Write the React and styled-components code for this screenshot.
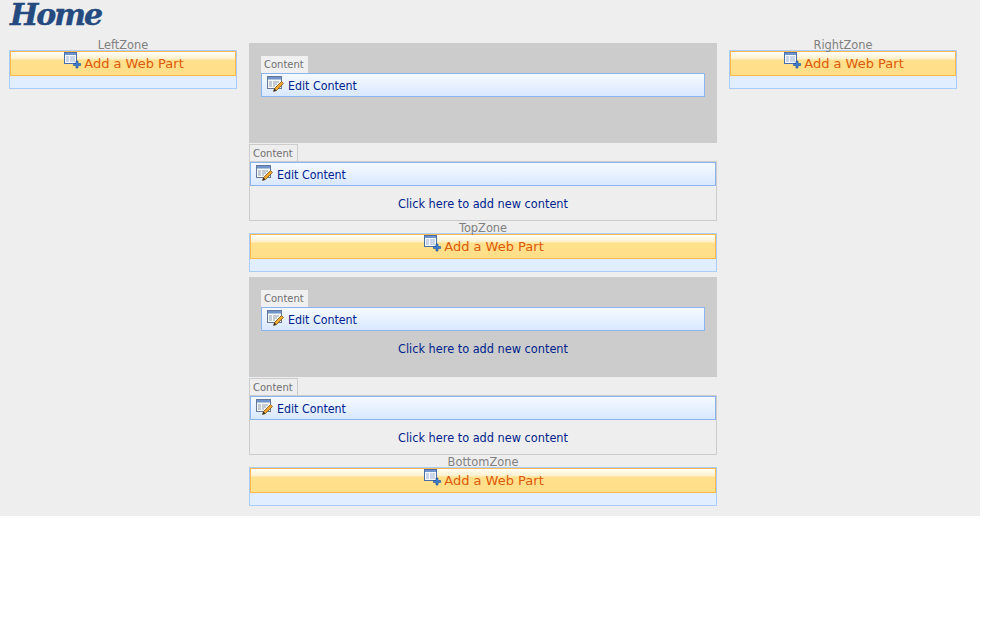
import React from "react";
import styled, { createGlobalStyle } from "styled-components";

const GlobalStyle = createGlobalStyle`
  html, body {
    margin: 0;
    padding: 0;
    background: #fff;
  }
  body {
    font-family: "DejaVu Sans", Verdana, sans-serif;
  }
`;

const Page = styled.div`
  width: 980px;
  height: 516px;
  background: #eeeeee;
`;

const Title = styled.h1`
  margin: 0;
  height: 43px;
  padding-left: 10px;
  font-family: "DejaVu Serif", serif;
  font-size: 30px;
  line-height: 30px;
  letter-spacing: -2px;
  font-weight: bold;
  font-style: italic;
  color: #254a80;
  -webkit-text-stroke: 0.4px #254a80;
`;

const Columns = styled.div`
  display: grid;
  grid-template-columns: 228px 468px 228px;
  column-gap: 12px;
  padding-left: 9px;
`;

const Center = styled.div`
  display: flex;
  flex-direction: column;
`;

const ZoneLabel = styled.div`
  height: 11px;
  font-size: 11.4px;
  line-height: 13px;
  text-align: center;
  color: #808080;
`;

const ZoneBox = styled.div`
  height: 39px;
  box-sizing: border-box;
  border: 1px solid #a9cdfb;
  background: #e1eeff;
`;

const AddButton = styled.div`
  height: 25px;
  box-sizing: border-box;
  border: 1px solid #ffb84d;
  background: linear-gradient(to bottom, #fffef8 0, #fff0cb 7px, #ffe08c 8px, #ffdf88 100%);
  display: flex;
  justify-content: center;
  gap: 3px;
  color: #dc5a0a;
  font-size: 13px;
  line-height: 23px;
`;

const AddIcon = styled.svg`
  width: 17px;
  height: 17px;
  flex: none;
  margin-left: 2px;
`;

const EditBar = styled.div`
  height: 24px;
  box-sizing: border-box;
  border: 1px solid #8ab4ee;
  background: linear-gradient(to bottom, #f6faff 0, #d9e8ff 100%);
  display: flex;
  align-items: center;
  gap: 4px;
  padding: 1px 0 0 5px;
  color: #001e8c;
  font-family: "DejaVu Sans Condensed", "DejaVu Sans", sans-serif;
  font-stretch: condensed;
  font-size: 12.3px;
`;

const EditIcon = styled.svg`
  width: 17px;
  height: 17px;
  flex: none;
  margin-top: -3px;
`;

const Tab = styled.div`
  width: fit-content;
  box-sizing: border-box;
  height: 17px;
  padding: 0 4px 0 3px;
  font-size: 10px;
  line-height: 17px;
  color: #707070;
  background: #f0f0f0;
  ${(props) => props.$outlined && "border: 1px solid #cccccc; border-bottom: 0; background: #eeeeee;"}
`;

const ClickText = styled.div`
  text-align: center;
  font-family: "DejaVu Sans Condensed", "DejaVu Sans", sans-serif;
  font-stretch: condensed;
  font-size: 12.6px;
  line-height: 14px;
  color: #001e8c;
`;

const GrayPart = styled.div`
  height: 100px;
  box-sizing: border-box;
  background: #cccccc;
  padding: 13px 12px 0;
  ${ClickText} {
    margin-top: 11px;
  }
`;

const PlainPart = styled.div`
  margin-top: 1px;
`;

const PlainBody = styled.div`
  height: 60px;
  box-sizing: border-box;
  border: 1px solid #cccccc;
  ${ClickText} {
    margin-top: 11px;
  }
`;

const ZoneGap = styled.div`
  margin-top: 1px;
  margin-bottom: 5px;
`;

const SideZone = styled.div`
  margin-top: -4px;
`;

const AddWebPartIcon = () => (
  <AddIcon viewBox="0 0 17 17">
    <rect x="0.5" y="0.5" width="12" height="11" fill="#f4f7fc" stroke="#4a6fa8" />
    <rect x="1" y="1" width="11" height="2" fill="#6f93cc" />
    <path d="M2 5h3M6 5h5M2 7h3M6 7h5M2 9h3M6 9h5" stroke="#9fb4d4" />
    <path d="M12 9h2v2.500h2.500v2H14V16h-2v-2.500H9.500v-2H12z" fill="#3f7fd0" stroke="#1c4a96" strokeWidth="0.6" />
  </AddIcon>
);

const EditContentIcon = () => (
  <EditIcon viewBox="0 0 17 17">
    <rect x="0.5" y="0.500" width="14" height="12" fill="#f6f6f2" stroke="#66789a" />
    <rect x="1" y="1" width="13" height="2.500" fill="#6f93cc" />
    <path d="M2 6h3M6 6h6M2 8h3M6 8h4M2 10h3M6 10h2" stroke="#8f9fb8" />
    <path d="M14.500 5.500l2 2-7 7-3 1 1-3z" fill="#f2a62c" stroke="#6b4a16" strokeWidth="0.7" />
    <path d="M6.500 15.500l1-3 2 2z" fill="#2a2a2a" />
  </EditIcon>
);

const Zone = ({ name }) => (
  <div>
    <ZoneLabel>{name}</ZoneLabel>
    <ZoneBox>
      <AddButton>
        <AddWebPartIcon />
        <span>Add a Web Part</span>
      </AddButton>
    </ZoneBox>
  </div>
);

const EditHeader = () => (
  <EditBar>
    <EditContentIcon />
    <span>Edit Content</span>
  </EditBar>
);

const Gray = ({ empty }) => (
  <GrayPart>
    <Tab>Content</Tab>
    <EditHeader />
    {!empty && <ClickText>Click here to add new content</ClickText>}
  </GrayPart>
);

const Plain = () => (
  <PlainPart>
    <Tab $outlined>Content</Tab>
    <PlainBody>
      <EditHeader />
      <ClickText>Click here to add new content</ClickText>
    </PlainBody>
  </PlainPart>
);

const App = () => (
  <>
    <GlobalStyle />
    <Page>
      <Title>Home</Title>
      <Columns>
        <SideZone>
          <Zone name="LeftZone" />
        </SideZone>
        <Center>
          <Gray empty />
          <Plain />
          <ZoneGap>
            <Zone name="TopZone" />
          </ZoneGap>
          <Gray />
          <Plain />
          <ZoneGap>
            <Zone name="BottomZone" />
          </ZoneGap>
        </Center>
        <SideZone>
          <Zone name="RightZone" />
        </SideZone>
      </Columns>
    </Page>
  </>
);

export default App;
